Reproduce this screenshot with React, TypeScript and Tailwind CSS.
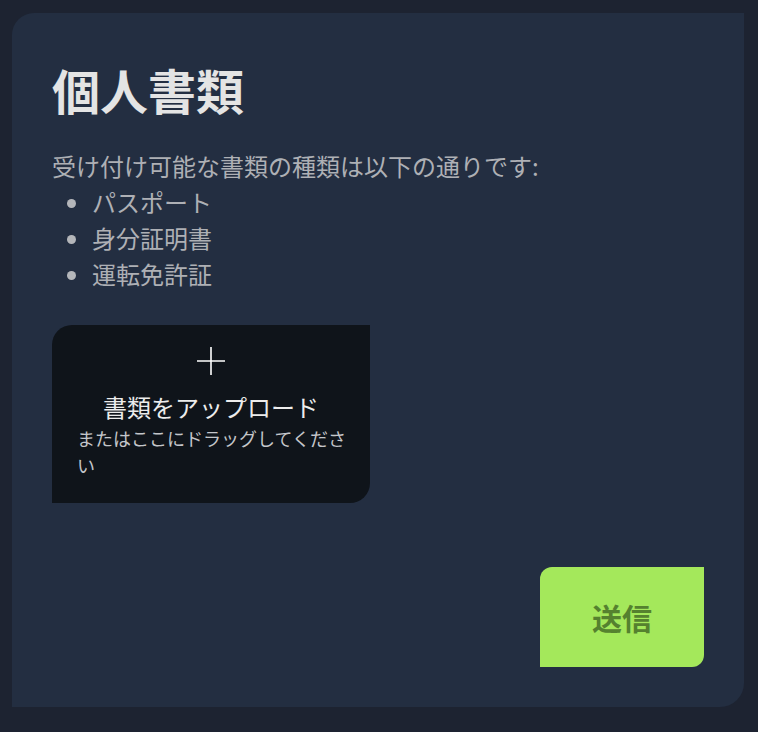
const documentTypes = ["パスポート", "身分証明書", "運転免許証"];

function PlusIcon() {
  return (
    <svg width="30" height="30" viewBox="0 0 30 30" fill="none" stroke="currentColor" strokeWidth="1.6">
      <path d="M15 1v28M1 15h28" />
    </svg>
  );
}

export default function App() {
  return (
    <div
      className="min-h-screen bg-[#1d2331] pl-3 pt-[13px] pb-[25px]"
      style={{ fontFamily: '"Noto Sans CJK JP", "Noto Sans", sans-serif' }}
    >
      <div className="w-[732px] rounded-tl-[22px] rounded-br-[24px] bg-[#232e41] p-10">
        <h1 className="text-[48px] font-bold leading-[72px] text-[#e4e4e4]">個人書類</h1>

        <p className="mt-[23px] text-[24px] leading-[36px] text-[#aeb0b5]">
          受け付け可能な書類の種類は以下の通りです:
        </p>
        <ul className="list-disc pl-10 text-[24px] leading-[36px] text-[#aeb0b5] marker:text-[#b4b6ba]">
          {documentTypes.map((item) => (
            <li key={item}>{item}</li>
          ))}
        </ul>

        <div className="mt-[33px] flex w-[318px] flex-col items-center rounded-tl-[20px] rounded-br-[20px] bg-[#0f141a] pb-[24px] pt-[21px] text-white">
          <PlusIcon />
          <div className="mt-[13px] text-[24px] font-normal leading-[36px] text-[#ececec]">
            書類をアップロード
          </div>
          <p className="w-full pl-[25px] pr-[18px] text-left text-[18px] leading-[27px] text-[#c4c6ca]">
            またはここにドラッグしてください
          </p>
        </div>

        <div className="mt-[64px] flex justify-end">
          <button className="flex h-[100px] w-[164px] items-center justify-center rounded-tl-[12px] rounded-br-[12px] bg-[#a4e85b] text-[30px] font-bold text-[#55812f]">
            送信
          </button>
        </div>
      </div>
    </div>
  );
}
